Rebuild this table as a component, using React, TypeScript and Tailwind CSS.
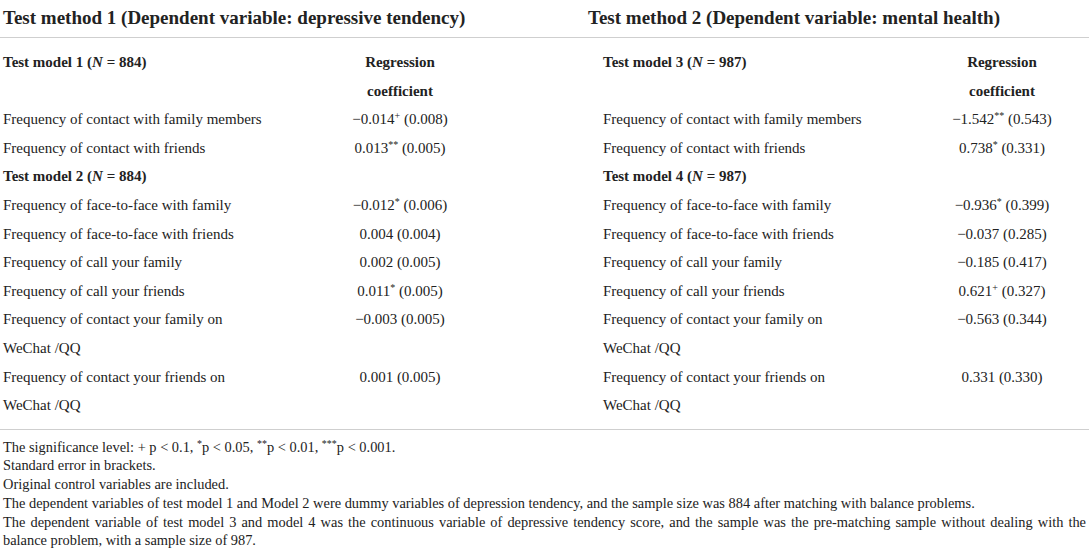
const serif = { fontFamily: '"Liberation Serif", "Times New Roman", serif' };

type Row = { label: string; value?: React.ReactNode; bold?: boolean; sub?: string };

function Sup({ children }: { children: React.ReactNode }) {
  return <sup className="text-[10px] leading-none">{children}</sup>;
}

const leftRows: Row[] = [
  { label: 'Test model 1 (', bold: true, sub: '884', value: 'Regression' },
  { label: '', value: 'coefficient', bold: true },
  { label: 'Frequency of contact with family members', value: <>−0.014<Sup>+</Sup> (0.008)</> },
  { label: 'Frequency of contact with friends', value: <>0.013<Sup>**</Sup> (0.005)</> },
  { label: 'Test model 2 (', bold: true, sub: '884' },
  { label: 'Frequency of face-to-face with family', value: <>−0.012<Sup>*</Sup> (0.006)</> },
  { label: 'Frequency of face-to-face with friends', value: '0.004 (0.004)' },
  { label: 'Frequency of call your family', value: '0.002 (0.005)' },
  { label: 'Frequency of call your friends', value: <>0.011<Sup>*</Sup> (0.005)</> },
  { label: 'Frequency of contact your family on', value: '−0.003 (0.005)' },
  { label: 'WeChat /QQ' },
  { label: 'Frequency of contact your friends on', value: '0.001 (0.005)' },
  { label: 'WeChat /QQ' },
];

const rightRows: Row[] = [
  { label: 'Test model 3 (', bold: true, sub: '987', value: 'Regression' },
  { label: '', value: 'coefficient', bold: true },
  { label: 'Frequency of contact with family members', value: <>−1.542<Sup>**</Sup> (0.543)</> },
  { label: 'Frequency of contact with friends', value: <>0.738<Sup>*</Sup> (0.331)</> },
  { label: 'Test model 4 (', bold: true, sub: '987' },
  { label: 'Frequency of face-to-face with family', value: <>−0.936<Sup>*</Sup> (0.399)</> },
  { label: 'Frequency of face-to-face with friends', value: '−0.037 (0.285)' },
  { label: 'Frequency of call your family', value: '−0.185 (0.417)' },
  { label: 'Frequency of call your friends', value: <>0.621<Sup>+</Sup> (0.327)</> },
  { label: 'Frequency of contact your family on', value: '−0.563 (0.344)' },
  { label: 'WeChat /QQ' },
  { label: 'Frequency of contact your friends on', value: '0.331 (0.330)' },
  { label: 'WeChat /QQ' },
];

function Label({ row }: { row: Row }) {
  if (row.sub) {
    return (
      <span className="font-bold">
        {row.label}
        <i>N</i> = {row.sub})
      </span>
    );
  }
  return <span className={row.bold ? 'font-bold' : ''}>{row.label}</span>;
}

function Model({ rows, labelClass, valueClass }: { rows: Row[]; labelClass: string; valueClass: string }) {
  return (
    <div className="flex flex-col">
      {rows.map((row, i) => (
        <div key={i} className="flex h-[28.6px] items-center">
          <div className={labelClass}>
            <Label row={row} />
          </div>
          <div className={`${valueClass} text-center ${row.value === 'Regression' || row.value === 'coefficient' ? 'font-bold' : ''}`}>
            {row.value}
          </div>
        </div>
      ))}
    </div>
  );
}

export default function App() {
  return (
    <div className="w-[1089px] h-[558px] bg-white text-[#222] overflow-hidden" style={serif}>
      <div className="flex h-[38px] items-center border-b border-[#cfcfcf] text-[19px] font-bold">
        <div className="w-[588px] pl-[3px]">Test method 1 (Dependent variable: depressive tendency)</div>
        <div>Test method 2 (Dependent variable: mental health)</div>
      </div>

      <div className="flex pt-[10px] pb-[9px] text-[15px] border-b border-[#cfcfcf]">
        <Model rows={leftRows} labelClass="w-[340px] pl-[3px]" valueClass="w-[120px]" />
        <div className="w-[128px]" />
        <Model rows={rightRows} labelClass="w-[354px] pl-[15px]" valueClass="w-[120px]" />
      </div>

      <div className="px-[3px] pt-[8px] text-[14.4px] leading-[18.7px] text-justify">
        <p>The significance level: + p &lt; 0.1, <Sup>*</Sup>p &lt; 0.05, <Sup>**</Sup>p &lt; 0.01, <Sup>***</Sup>p &lt; 0.001.</p>
        <p>Standard error in brackets.</p>
        <p>Original control variables are included.</p>
        <p>The dependent variables of test model 1 and Model 2 were dummy variables of depression tendency, and the sample size was 884 after matching with balance problems.</p>
        <p>The dependent variable of test model 3 and model 4 was the continuous variable of depressive tendency score, and the sample was the pre-matching sample without dealing with the balance problem, with a sample size of 987.</p>
      </div>
    </div>
  );
}
